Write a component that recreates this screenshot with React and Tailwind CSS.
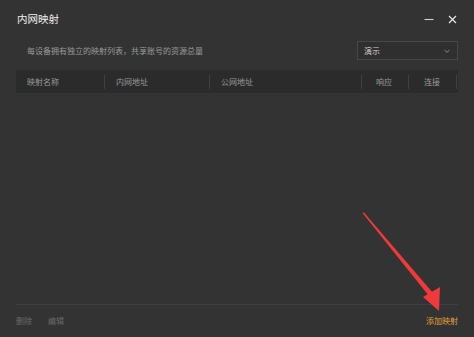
import React from "react";

export default function App() {
  const font = { fontFamily: '"Noto Sans CJK SC", "Noto Sans", sans-serif' };
  return (
    <div className="relative w-[474px] h-[337px] bg-[#333333] overflow-hidden flex flex-col" style={font}>
      {/* title bar */}
      <div className="flex items-center h-[38px] pl-[17px] pr-[17px]">
        <span className="text-[10.5px] text-[#f0f0f0] leading-none">内网映射</span>
        <div className="ml-auto flex items-center gap-[14px]">
          <svg width="10" height="10" viewBox="0 0 10 10"><path d="M0.5 5.5H9.5" stroke="#d0d0d0" strokeWidth="1.1" /></svg>
          <svg width="9" height="9" viewBox="0 0 9 9"><path d="M1 1L8 8M8 1L1 8" stroke="#e8e8e8" strokeWidth="1.2" /></svg>
        </div>
      </div>
      {/* subtitle + select */}
      <div className="flex items-center pl-[27px] pr-[16px] mt-[3px]">
        <span className="text-[8px] text-[#9a9a9a] leading-none">每设备拥有独立的映射列表，共享账号的资源总量</span>
        <div className="ml-auto w-[101px] h-[19px] border border-[#474747] bg-[#2f2f2f] flex items-center pl-[6px] pr-[6px]">
          <span className="text-[8px] text-[#cfcfcf] leading-none">演示</span>
          <svg className="ml-auto" width="8" height="8" viewBox="0 0 8 8"><path d="M1.5 3L4 5.3L6.5 3" stroke="#888" strokeWidth="1" fill="none" /></svg>
        </div>
      </div>
      {/* table header */}
      <div className="mx-[16px] mt-[10px] h-[23px] bg-[#2b2b2b] flex items-center text-[8px] text-[#9a9a9a] leading-none">
        <div className="w-[89px] pl-[11px] border-r border-[#404040] h-[14px] flex items-center">映射名称</div>
        <div className="w-[105px] pl-[11px] border-r border-[#404040] h-[14px] flex items-center">内网地址</div>
        <div className="w-[152px] pl-[11px] border-r border-[#404040] h-[14px] flex items-center">公网地址</div>
        <div className="w-[47px] pl-[14px] border-r border-[#404040] h-[14px] flex items-center">响应</div>
        <div className="w-[48px] pl-[15px] border-r border-[#404040] h-[14px] flex items-center">连接</div>
      </div>
      <div className="flex-1" />
      {/* footer */}
      <div className="mx-[16px] border-t border-[#3e3e3e] h-[32px] flex items-center text-[8px] leading-none mb-[1px]">
        <span className="text-[#6a6a6a]">删除</span>
        <span className="text-[#6a6a6a] ml-[16px]">编辑</span>
        <span className="ml-auto text-[#e0a23a]">添加映射</span>
      </div>
      {/* red arrow annotation */}
      <svg className="absolute left-0 top-0 pointer-events-none" width="474" height="337" viewBox="0 0 474 337">
        <polygon points="362.5,213 364,212.5 433,293 429,296" fill="#f03a3a" />
        <polygon points="423,297 440,287 439,311" fill="#f03a3a" />
      </svg>
    </div>
  );
}
